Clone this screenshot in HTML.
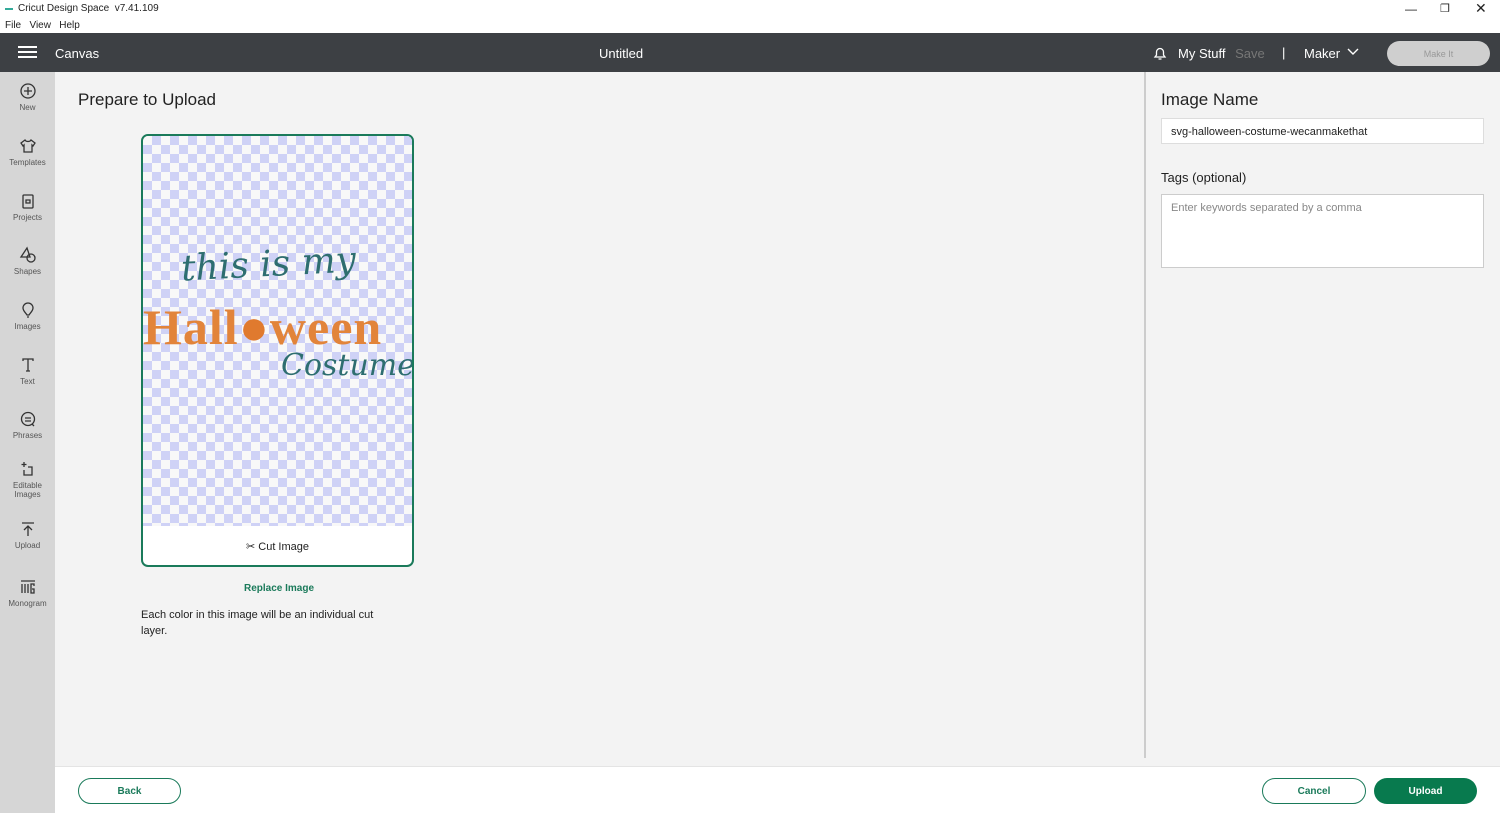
<!DOCTYPE html><html><head><style>
*{box-sizing:border-box;margin:0;padding:0}
body{width:1500px;height:813px;overflow:hidden;font-family:"Liberation Sans",sans-serif;background:#f3f3f3;position:relative;color:#222}
.abs{position:absolute}
.side span{display:block;text-align:center;font-size:8px;color:#555;width:55px;margin-top:3px}
.side svg{display:block;margin:0 auto}
.btn{position:absolute;height:26px;border-radius:13px;font-size:10px;font-weight:bold;display:flex;align-items:center;justify-content:center}
</style></head><body>
<div class="abs" style="left:0;top:0;width:1500px;height:33px;background:#fff"></div>
<div class="abs" style="left:5px;top:8px;width:8px;height:2px;background:#3a9;"></div>
<div class="abs" style="left:18px;top:3px;font-size:10px">Cricut Design Space &nbsp;v7.41.109</div>
<div class="abs" style="left:5px;top:20px;font-size:10px">File &nbsp; View &nbsp; Help</div>
<div class="abs" style="left:1405px;top:2px;font-size:12px">—</div>
<div class="abs" style="left:1440px;top:2px;font-size:11px">❐</div>
<div class="abs" style="left:1475px;top:0px;font-size:14px">✕</div>
<div class="abs" style="left:0;top:33px;width:1500px;height:39px;background:#3d4044"></div>
<div class="abs" style="left:18px;top:46px;width:19px;height:2px;background:#fff;box-shadow:0 5px 0 #fff,0 10px 0 #fff"></div>
<div class="abs" style="left:55px;top:46px;color:#fff;font-size:13px">Canvas</div>
<div class="abs" style="left:599px;top:46px;color:#fff;font-size:13px">Untitled</div>
<svg class="abs" style="left:1152px;top:45px" width="16" height="16" viewBox="0 0 16 16" fill="none" stroke="#fff" stroke-width="1.3"><path d="M3 12h10l-1.5-2V7a3.5 3.5 0 0 0-7 0v3z M6.5 14h3"/></svg>
<div class="abs" style="left:1178px;top:46px;color:#fff;font-size:13px">My Stuff <span style="color:#777;margin-left:6px">Save</span></div>
<div class="abs" style="left:1282px;top:45px;color:#fff;font-size:13px">|</div>
<div class="abs" style="left:1304px;top:46px;color:#fff;font-size:13px">Maker</div>
<svg class="abs" style="left:1347px;top:48px" width="12" height="8" fill="none" stroke="#fff" stroke-width="1.4"><path d="M1 1l5 5 5-5"/></svg>
<div class="btn" style="left:1387px;top:41px;width:103px;height:25px;background:#cfcfcf;color:#999;font-weight:normal;font-size:9px">Make It</div>
<div class="abs side" style="left:0;top:72px;width:55px;height:741px;background:#d6d6d6">
 <div class="abs" style="top:10px"><svg width="18" height="18" fill="none" stroke="#333" stroke-width="1.3"><circle cx="9" cy="9" r="7"/><path d="M9 5v8M5 9h8"/></svg><span>New</span></div>
 <div class="abs" style="top:65px"><svg width="18" height="18" fill="none" stroke="#333" stroke-width="1.3"><path d="M6 3L2 6l2 3 1-1v7h8V8l1 1 2-3-4-3c-1 2-5 2-6 0z"/></svg><span>Templates</span></div>
 <div class="abs" style="top:120px"><svg width="18" height="18" fill="none" stroke="#333" stroke-width="1.3"><rect x="4" y="3" width="10" height="13" rx="1"/><path d="M7 8h4v3H7z"/></svg><span>Projects</span></div>
 <div class="abs" style="top:174px"><svg width="18" height="18" fill="none" stroke="#333" stroke-width="1.3"><path d="M8 2l-6 9h9z"/><circle cx="12" cy="12" r="4"/></svg><span>Shapes</span></div>
 <div class="abs" style="top:229px"><svg width="18" height="18" fill="none" stroke="#333" stroke-width="1.3"><path d="M9 2a5 5 0 0 0-5 5c0 3 3 5 4 7h2c1-2 4-4 4-7a5 5 0 0 0-5-5zM8 16h2"/></svg><span>Images</span></div>
 <div class="abs" style="top:284px"><svg width="18" height="18" fill="none" stroke="#333" stroke-width="1.3"><path d="M4 5V3h10v2M9 3v12M7 15h4"/></svg><span>Text</span></div>
 <div class="abs" style="top:338px"><svg width="18" height="18" fill="none" stroke="#333" stroke-width="1.3"><circle cx="9" cy="9" r="6.5"/><path d="M6 8h6M6 11h6M13 14l2 2"/></svg><span>Phrases</span></div>
 <div class="abs" style="top:388px"><svg width="18" height="18" fill="none" stroke="#333" stroke-width="1.3"><path d="M5 2v5M2.5 4.5h5M5 10v5h8V7h-4"/></svg><span>Editable<br>Images</span></div>
 <div class="abs" style="top:448px"><svg width="18" height="18" fill="none" stroke="#333" stroke-width="1.3"><path d="M3 3h12M9 16V6M5 10l4-4 4 4"/></svg><span>Upload</span></div>
 <div class="abs" style="top:506px"><svg width="18" height="18" fill="none" stroke="#333" stroke-width="1.3"><path d="M2 3h14M3 6v9M6 6v9M9 6v9M15 8V6h-3v9h3v-4h-2"/></svg><span>Monogram</span></div>
</div>
<div class="abs" style="left:78px;top:90px;font-size:17px">Prepare to Upload</div>
<div class="abs" style="left:141px;top:134px;width:273px;height:433px;border:2px solid #1a7a5a;border-radius:7px;background:#fff;overflow:hidden">
 <div style="margin:0;height:390px;background-color:#f8f8f8;background-image:linear-gradient(45deg,#cfd2f6 25%,transparent 25%,transparent 75%,#cfd2f6 75%),linear-gradient(45deg,#cfd2f6 25%,transparent 25%,transparent 75%,#cfd2f6 75%);background-size:18px 18px;background-position:0 0,9px 9px;position:relative">
  <div class="abs" style="left:38px;top:108px;font-family:'DejaVu Serif',serif;font-style:italic;font-size:36px;color:#2e6e70;transform:rotate(-3deg)">this is my</div>
  <div class="abs" style="left:0;top:162px;font-family:'Liberation Serif',serif;font-weight:bold;font-size:50px;color:#e2843a;letter-spacing:1px">Hall<span style="color:#e07a2e">●</span>ween</div>
  <div class="abs" style="left:138px;top:212px;font-family:'DejaVu Serif',serif;font-style:italic;font-size:30px;color:#2e6e70">Costume!</div>
 </div>
 <div style="text-align:center;font-size:11px;margin-top:14px">✂ Cut Image</div>
</div>
<div class="abs" style="left:244px;top:583px;font-size:10px;font-weight:bold;color:#1a7a5a">Replace Image</div>
<div class="abs" style="left:141px;top:607px;font-size:11px;line-height:16px">Each color in this image will be an individual cut<br>layer.</div>
<div class="abs" style="left:1144px;top:72px;width:2px;height:686px;background:#ccc"></div>
<div class="abs" style="left:1161px;top:90px;font-size:17px">Image Name</div>
<div class="abs" style="left:1161px;top:118px;width:323px;height:26px;border:1px solid #ddd;background:#fff;font-size:11px;padding:7px 9px">svg-halloween-costume-wecanmakethat</div>
<div class="abs" style="left:1161px;top:170px;font-size:13px">Tags (optional)</div>
<div class="abs" style="left:1161px;top:194px;width:323px;height:74px;border:1px solid #ccc;background:#fff;font-size:11px;padding:7px 9px;color:#888">Enter keywords separated by a comma</div>
<div class="abs" style="left:55px;top:766px;width:1445px;height:47px;background:#fff;border-top:1px solid #e4e4e4"></div>
<div class="btn" style="left:78px;top:778px;width:103px;border:1px solid #1a7a5a;color:#1a7a5a">Back</div>
<div class="btn" style="left:1262px;top:778px;width:104px;border:1px solid #1a7a5a;color:#1a7a5a">Cancel</div>
<div class="btn" style="left:1374px;top:778px;width:103px;background:#087a4e;color:#fff">Upload</div>
</body></html>
